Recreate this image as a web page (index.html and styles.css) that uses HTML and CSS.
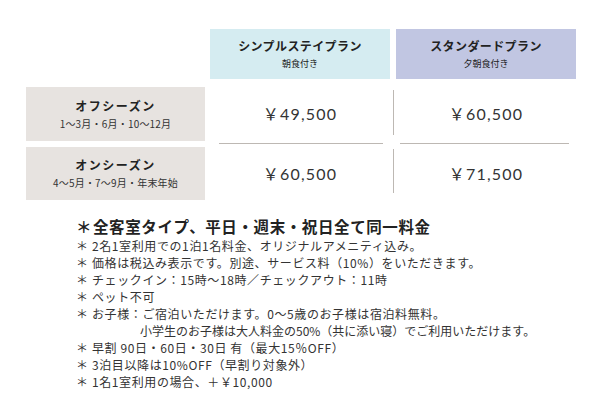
FILE: index.html
```html
<!DOCTYPE html>
<html lang="ja">
<head>
<meta charset="utf-8">
<link rel="stylesheet" href="styles.css">
</head>
<body>
<div class="page">
  <div class="table">
    <div class="head h1"><div class="plan">シンプルステイプラン</div><div class="meal">朝食付き</div></div>
    <div class="head h2"><div class="plan">スタンダードプラン</div><div class="meal">夕朝食付き</div></div>

    <div class="label r1"><div class="season">オフシーズン</div><div class="months">1～3月・6月・10～12月</div></div>
    <div class="price r1 c1">￥49,500</div>
    <div class="vline r1"></div>
    <div class="price r1 c2">￥60,500</div>

    <div class="hline c1"></div>
    <div class="hline c2"></div>

    <div class="label r2"><div class="season">オンシーズン</div><div class="months">4～5月・7～9月・年末年始</div></div>
    <div class="price r2 c1">￥60,500</div>
    <div class="vline r2"></div>
    <div class="price r2 c2">￥71,500</div>
  </div>

  <div class="notes">
    <p class="lead"><span class="ast">＊</span>全客室タイプ、平日・週末・祝日全て同一料金</p>
    <p><span class="ast">＊</span>2名1室利用での1泊1名料金、オリジナルアメニティ込み。</p>
    <p><span class="ast">＊</span>価格は税込み表示です。別途、サービス料（10%）をいただきます。</p>
    <p><span class="ast">＊</span>チェックイン：15時～18時／チェックアウト：11時</p>
    <p><span class="ast">＊</span>ペット不可</p>
    <p><span class="ast">＊</span>お子様：ご宿泊いただけます。0～5歳のお子様は宿泊料無料。</p>
    <p class="indent">小学生のお子様は大人料金の50%（共に添い寝）でご利用いただけます。</p>
    <p><span class="ast">＊</span>早割 90日・60日・30日 有（最大15％OFF）</p>
    <p><span class="ast">＊</span>3泊目以降は10%OFF（早割り対象外）</p>
    <p><span class="ast">＊</span>1名1室利用の場合、＋￥10,000</p>
  </div>
</div>
</body>
</html>
```

FILE: styles.css
```css
* { box-sizing: border-box; }
html, body { margin: 0; padding: 0; background: #ffffff; }
body {
  font-family: "Noto Sans CJK JP", "Noto Sans", sans-serif;
  color: #2e2e2e;
  width: 600px;
  height: 413px;
  overflow: hidden;
}
.page { padding: 29px 0 0 26px; }

.table {
  display: grid;
  grid-template-columns: 179px 5px 180px 6px 180px;
  grid-template-rows: 50px 8px 54px 6px 53px;
}
.head {
  grid-row: 1;
  display: flex;
  flex-direction: column;
  align-items: center;
  justify-content: center;
  color: #222;
}
.head.h1 { grid-column: 3; background: #d5ecf1; }
.head.h2 { grid-column: 5; background: #c1c6e2; }
.plan { font-size: 12px; font-weight: bold; letter-spacing: 0.4px; line-height: 16px; }
.meal { font-size: 9px; line-height: 13px; margin-top: 3px; }

.label {
  grid-column: 1;
  background: #e7e3e0;
  display: flex;
  flex-direction: column;
  align-items: center;
  justify-content: center;
  color: #222;
}
.label.r1 { grid-row: 3; }
.label.r2 { grid-row: 5; }
.season { font-size: 12px; font-weight: bold; letter-spacing: 1.5px; line-height: 16px; }
.months { font-size: 10px; line-height: 14px; margin-top: 3px; color: #333; letter-spacing: 0.2px; }

.price {
  display: flex;
  align-items: center;
  justify-content: center;
  font-family: "Lato", "Noto Sans CJK JP", sans-serif;
  font-size: 16px;
  letter-spacing: 1.2px;
  color: #333;
}
.price.r1 { grid-row: 3; padding-bottom: 3px; }
.price.r2 { grid-row: 5; padding-bottom: 2px; }
.price.c1 { grid-column: 3; }
.price.c2 { grid-column: 5; }

.vline { grid-column: 4; width: 1px; margin-left: 3px; background: #bdb8b3; }
.vline.r1 { grid-row: 3; margin-top: 3px; margin-bottom: 6px; }
.vline.r2 { grid-row: 5; margin-top: 2px; margin-bottom: 7px; }

.hline { grid-row: 4; height: 1px; margin-top: 2px; background: #bdb8b3; }
.hline.c1 { grid-column: 3; margin-left: 9px; margin-right: 7px; }
.hline.c2 { grid-column: 5; margin-left: 4px; margin-right: 7px; }

.notes { margin-top: 15px; padding-left: 50px; color: #333; }
.notes p { margin: 0; font-size: 12px; line-height: 17px; white-space: nowrap; letter-spacing: 0.6px; }
.notes .ast { display: inline-block; width: 16px; letter-spacing: 0; }
.notes p.lead { font-size: 15.5px; font-weight: bold; line-height: 22px; margin-bottom: 0; color: #222; letter-spacing: 0.6px; }
.notes p.lead .ast { width: 17px; }
.notes p.indent { padding-left: 64px; letter-spacing: 0; }
```
